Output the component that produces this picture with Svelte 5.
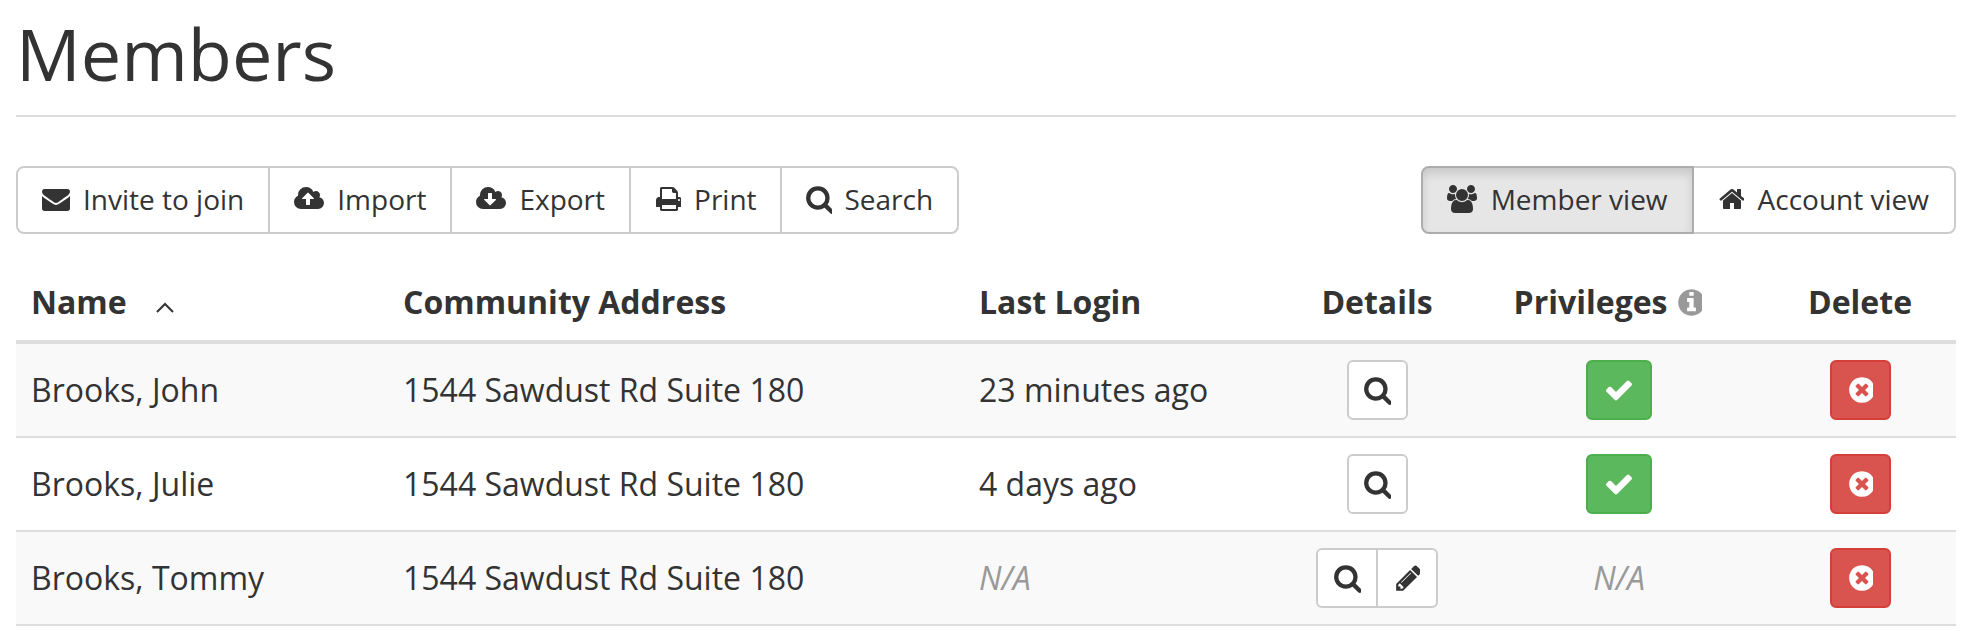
<script>
  const paths = {
    envelope: "M1792 710v794q0 66-47 113t-113 47h-1472q-66 0-113-47t-47-113v-794q44 49 101 87 362 246 497 345 57 42 92.500 65.500t94.500 48 110 24.500h2q51 0 110-24.500t94.500-48 92.500-65.500q170-123 498-345 57-39 100-87zm0-294q0 79-49 151t-122 123q-376 261-468 325-10 7-42.500 30.500t-54 38-52 32.500-57.500 27-50 9h-2q-23 0-50-9t-57.500-27-52-32.500-54-38-42.500-30.500q-91-64-262-182.500t-205-142.500q-62-42-117-115.500t-55-136.500q0-78 41.500-130t118.500-52h1472q65 0 112.500 47t47.500 113z",
    upload: "M1280 864q0-14-9-23l-352-352q-9-9-23-9t-23 9l-351 351q-10 12-10 24 0 14 9 23t23 9h224v352q0 13 9.500 22.500t22.500 9.500h192q13 0 22.500-9.500t9.500-22.500v-352h224q13 0 22.500-9.500t9.500-22.500zm640 288q0 159-112.500 271.500t-271.500 112.500h-1088q-185 0-316.500-131.500t-131.500-316.500q0-130 70-240t188-165q-2-30-2-43 0-212 150-362t362-150q156 0 285.500 87t188.500 231q71-62 166-62 106 0 181 75t75 181q0 76-41 138 130 31 213.500 135.500t83.500 238.500z",
    download: "M1280 928q0-14-9-23t-23-9h-224v-352q0-13-9.500-22.500t-22.500-9.500h-192q-13 0-22.500 9.500t-9.500 22.500v352h-224q-13 0-22.500 9.500t-9.500 22.500q0 14 9 23l352 352q9 9 23 9t23-9l351-351q10-12 10-24zm640 224q0 159-112.500 271.500t-271.500 112.500h-1088q-185 0-316.500-131.500t-131.500-316.500q0-130 70-240t188-165q-2-30-2-43 0-212 150-362t362-150q156 0 285.500 87t188.500 231q71-62 166-62 106 0 181 75t75 181q0 76-41 138 130 31 213.500 135.500t83.500 238.500z",
    print: "M448 1536h896v-256h-896v256zm0-640h896v-384h-160q-40 0-68-28t-28-68v-160h-640v640zm1152 64q0-26-19-45t-45-19-45 19-19 45 19 45 45 19 45-19 19-45zm128 0v416q0 13-9.500 22.500t-22.500 9.500h-224v160q0 40-28 68t-68 28h-960q-40 0-68-28t-28-68v-160h-224q-13 0-22.500-9.500t-9.500-22.500v-416q0-79 56.500-135.500t135.500-56.500h64v-544q0-40 28-68t68-28h672q40 0 88 20t76 48l152 152q28 28 48 76t20 88v256h64q79 0 135.500 56.500t56.500 135.500z",
    search: "M1216 832q0-185-131.500-316.500t-316.500-131.500-316.500 131.500-131.500 316.500 131.500 316.500 316.500 131.500 316.500-131.500 131.500-316.500zm512 832q0 52-38 90t-90 38q-54 0-90-38l-343-342q-179 124-399 124-143 0-273.500-55.500t-225-150-150-225-55.500-273.500 55.500-273.500 150-225 225-150 273.500-55.500 273.500 55.500 225 150 150 225 55.500 273.500q0 220-124 399l343 343q37 37 37 90z",
    users: "M593 896q-162 5-265 128h-134q-82 0-138-40.500t-56-118.500q0-353 124-353 6 0 43.500 21t97.500 42.500 119 21.500q67 0 133-23-5 37-5 66 0 139 81 256zm1071 637q0 120-73 189.500t-194 69.500h-874q-121 0-194-69.500t-73-189.500q0-53 3.500-103.500t14-109 26.500-108.500 43-97.500 62-81 85.500-53.500 111.500-20q10 0 43 21.500t73 48 107 48 135 21.500 135-21.500 107-48 73-48 43-21.500q61 0 111.500 20t85.500 53.500 62 81 43 97.500 26.500 108.500 14 109 3.500 103.500zm-1024-1277q0 106-75 181t-181 75-181-75-75-181 75-181 181-75 181 75 75 181zm704 384q0 159-112.500 271.500t-271.500 112.500-271.500-112.500-112.500-271.500 112.500-271.500 271.500-112.500 271.500 112.500 112.500 271.500zm576 225q0 78-56 118.500t-138 40.500h-134q-103-123-265-128 81-117 81-256 0-29-5-66 66 23 133 23 59 0 119-21.500t97.500-42.500 43.500-21q124 0 124 353zm-128-609q0 106-75 181t-181 75-181-75-75-181 75-181 181-75 181 75 75 181z",
    home: "M1472 992v480q0 26-19 45t-45 19h-384v-384h-256v384h-384q-26 0-45-19t-19-45v-480q0-1 .5-3t.5-3l575-474 575 474q1 2 1 6zm223-69l-62 74q-8 9-21 11h-3q-13 0-21-7l-692-577-692 577q-12 8-24 7-13-2-21-11l-62-74q-8-10-7-23.500t11-21.500l719-599q32-26 76-26t76 26l244 204v-195q0-14 9-23t23-9h192q14 0 23 9t9 23v408l219 182q10 8 11 21.500t-7 23.500z",
    pencil: "M491 1536l91-91-235-235-91 91v107h128v128h107zm523-928q0-22-22-22-10 0-17 7l-542 542q-7 7-7 17 0 22 22 22 10 0 17-7l542-542q7-7 7-17zm-54-192l416 416-832 832h-416v-416zm683 96q0 53-37 90l-166 166-416-416 166-165q36-38 90-38 53 0 91 38l235 234q37 39 37 91z",
    check: "M1671 566q0 40-28 68l-724 724-136 136q-28 28-68 28t-68-28l-136-136-362-362q-28-28-28-68t28-68l136-136q28-28 68-28t68 28l294 295 656-657q28-28 68-28t68 28l136 136q28 28 28 68z",
    times: "M1277 1122q0-26-19-45l-181-181 181-181q19-19 19-45 0-27-19-46l-90-90q-19-19-46-19-26 0-45 19l-181 181-181-181q-19-19-45-19-27 0-46 19l-90 90q-19 19-19 46 0 26 19 45l181 181-181 181q-19 19-19 45 0 27 19 46l90 90q19 19 46 19 26 0 45-19l181-181 181 181q19 19 45 19 27 0 46-19l90-90q19-19 19-46zm387-226q0 209-103 385.500t-279.500 279.500-385.500 103-385.500-103-279.500-279.500-103-385.500 103-385.500 279.500-279.500 385.500-103 385.500 103 279.500 279.500 103 385.500z",
    info: "M1152 1376v-160q0-14-9-23t-23-9h-96v-512q0-14-9-23t-23-9h-320q-14 0-23 9t-9 23v160q0 14 9 23t23 9h96v320h-96q-14 0-23 9t-9 23v160q0 14 9 23t23 9h448q14 0 23-9t9-23zm-128-896v-160q0-14-9-23t-23-9h-192q-14 0-23 9t-9 23v160q0 14 9 23t23 9h192q14 0 23-9t9-23zm640 416q0 209-103 385.500t-279.500 279.500-385.500 103-385.500-103-279.500-279.500-103-385.500 103-385.500 279.500-279.500 385.500-103 385.500 103 279.500 279.500 103 385.500z"
  };

  const actions = [
    { label: "Invite to join", icon: "envelope", w: 1792, size: 28 },
    { label: "Import", icon: "upload", w: 1920, size: 28 },
    { label: "Export", icon: "download", w: 1920, size: 28 },
    { label: "Print", icon: "print", w: 1664, size: 28 },
    { label: "Search", icon: "search", w: 1664, size: 30 }
  ];

  const members = [
    { name: "Brooks, John", login: "23 minutes ago", admin: true, edit: false },
    { name: "Brooks, Julie", login: "4 days ago", admin: true, edit: false },
    { name: "Brooks, Tommy", login: null, admin: false, edit: true }
  ];
</script>

{#snippet icon(name, w, size)}
  <svg class="icon" width={(size * w) / 1792} height={size} viewBox="0 0 {w} 1792" fill="currentColor" aria-hidden="true">
    <path d={paths[name]} />
  </svg>
{/snippet}

<div class="page">
  <h1>Members</h1>

  <div class="toolbar">
    <div class="group actions">
      {#each actions as a}
        <button class="btn">{@render icon(a.icon, a.w, a.size)}<span>{a.label}</span></button>
      {/each}
    </div>
    <div class="group views">
      <button class="btn active">{@render icon("users", 1920, 28)}<span>Member view</span></button>
      <button class="btn">{@render icon("home", 1664, 28)}<span>Account view</span></button>
    </div>
  </div>

  <table>
    <colgroup>
      <col style="width: 371px" />
      <col style="width: 576px" />
      <col style="width: 319px" />
      <col style="width: 190px" />
      <col style="width: 294px" />
      <col style="width: 190px" />
    </colgroup>
    <thead>
      <tr>
        <th>
          Name
          <svg class="sort" width="20" height="13" viewBox="0 0 20 13" aria-hidden="true">
            <path d="M2 11 L10 3 L18 11" fill="none" stroke="#333" stroke-width="2" />
          </svg>
        </th>
        <th>Community Address</th>
        <th>Last Login</th>
        <th class="center">Details</th>
        <th class="center priv">
          Privileges
          <span class="info">{@render icon("info", 1536, 31)}</span>
        </th>
        <th class="center">Delete</th>
      </tr>
    </thead>
    <tbody>
      {#each members as m}
        <tr>
          <td>{m.name}</td>
          <td>1544 Sawdust Rd Suite 180</td>
          <td>
            {#if m.login}{m.login}{:else}<em>N/A</em>{/if}
          </td>
          <td class="center">
            <div class="group small">
              <button class="btn sm">{@render icon("search", 1664, 30)}</button>
              {#if m.edit}
                <button class="btn sm">{@render icon("pencil", 1515, 30)}</button>
              {/if}
            </div>
          </td>
          <td class="center">
            {#if m.admin}
              <button class="btn sm success">{@render icon("check", 1792, 30)}</button>
            {:else}
              <em>N/A</em>
            {/if}
          </td>
          <td class="center">
            <button class="btn sm danger">{@render icon("times", 1536, 30)}</button>
          </td>
        </tr>
      {/each}
    </tbody>
  </table>
</div>

<style>
  :global(body) {
    margin: 0;
    background: #fff;
  }

  .page {
    padding: 0 16px;
    font-family: "Open Sans", "Liberation Sans", sans-serif;
    font-size: 28px;
    line-height: 40px;
    color: #333;
  }

  h1 {
    margin: 0;
    padding: 10px 0 18px;
    height: 87px;
    font-size: 72px;
    line-height: 87px;
    font-weight: 400;
    border-bottom: 2px solid #ddd;
  }

  .toolbar {
    display: flex;
    justify-content: space-between;
    margin-top: 49px;
    margin-bottom: 34px;
  }

  .group {
    display: inline-flex;
    vertical-align: middle;
  }

  .btn {
    display: inline-flex;
    align-items: center;
    justify-content: center;
    gap: 13px;
    height: 68px;
    padding: 0 24px 2px;
    margin: 0 0 0 -2px;
    font: inherit;
    color: #333;
    background: #fff;
    border: 2px solid #ccc;
    border-radius: 0;
  }

  .btn:first-child {
    margin-left: 0;
    border-top-left-radius: 8px;
    border-bottom-left-radius: 8px;
  }

  .btn:last-child {
    border-top-right-radius: 8px;
    border-bottom-right-radius: 8px;
  }

  .actions .btn:nth-child(4) {
    padding-right: 23px;
  }

  .actions .btn:last-child {
    gap: 12px;
    padding-left: 23px;
  }

  .views .btn {
    gap: 14px;
  }

  .views .btn:last-child {
    padding-right: 25px;
  }

  .btn.active {
    background: #e6e6e6;
    border-color: #adadad;
    box-shadow: inset 0 6px 10px rgba(0, 0, 0, 0.125);
    position: relative;
    z-index: 1;
  }

  .btn.sm {
    height: 60px;
    width: 61px;
    padding: 0;
    border-radius: 6px;
  }

  .group.small .btn {
    width: 62px;
  }

  .group.small .btn:only-child {
    width: 61px;
  }

  .group.small .btn:not(:last-child) {
    border-top-right-radius: 0;
    border-bottom-right-radius: 0;
  }

  .group.small .btn:not(:first-child) {
    border-top-left-radius: 0;
    border-bottom-left-radius: 0;
  }

  .btn.success {
    width: 66px;
    color: #fff;
    background: #5cb85c;
    border-color: #4cae4c;
  }

  .btn.danger {
    width: 61px;
    color: #fff;
    background: #d9534f;
    border-color: #d43f3a;
  }

  .icon {
    display: block;
    flex: none;
  }

  table {
    width: 1940px;
    table-layout: fixed;
    border-collapse: separate;
    border-spacing: 0;
    font-size: 32px;
  }

  th,
  td {
    padding: 16px;
    text-align: left;
    vertical-align: middle;
    font-weight: 400;
  }

  th:first-child,
  td:first-child {
    padding-left: 15px;
  }

  th:last-child,
  td:last-child {
    padding-right: 18px;
    padding-left: 16px;
  }

  th {
    padding-top: 14px;
    padding-bottom: 18px;
    font-weight: 700;
    border-bottom: 4px solid #ddd;
    white-space: nowrap;
  }

  td {
    border-bottom: 2px solid #ddd;
  }

  tbody tr:nth-child(odd) td {
    background: #f9f9f9;
  }

  .center {
    text-align: center;
  }

  th.priv {
    padding-right: 38px;
  }

  .sort {
    margin-left: 20px;
  }

  .info {
    display: inline-block;
    color: #999;
    vertical-align: -4px;
  }

  em {
    color: #999;
  }
</style>
